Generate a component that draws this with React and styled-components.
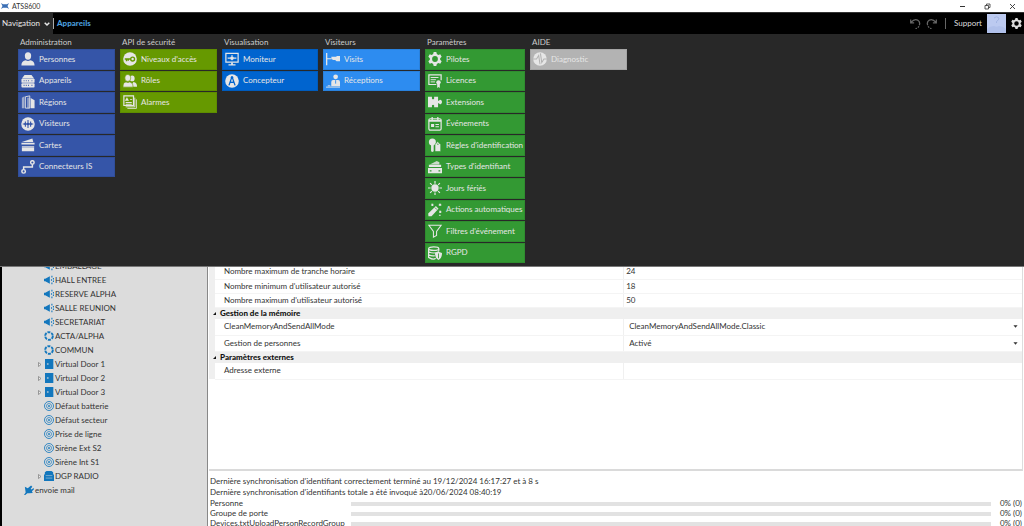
import React from "react";
import styled, { createGlobalStyle } from "styled-components";

const GlobalStyle = createGlobalStyle`
  * {
    box-sizing: border-box;
  }
  body {
    margin: 0;
    background: #fff;
    color: #333;
    font-family: Lato, "Open Sans", sans-serif;
    font-size: 8px;
    line-height: 11px;
  }
  button, input, select {
    font: inherit;
    color: inherit;
    margin: 0;
    padding: 0;
    border: 0;
    background: none;
  }
  ul {
    list-style: none;
    margin: 0;
    padding: 0;
  }
`;

const Window = styled.div`
  display: flex;
  flex-direction: column;
  height: 100vh;
  overflow: hidden;
`;

const TitleBar = styled.header`
  display: flex;
  align-items: center;
  gap: 3px;
  flex: none;
  height: 12px;
  padding: 0 7px 0 1px;
  background: #fff;
  color: #333;
  font-size: 7px;
`;

const WindowButtons = styled.div`
  display: flex;
  gap: 16px;
  margin-left: auto;

  button {
    display: flex;
    width: 9px;
    height: 9px;
    align-items: center;
    justify-content: center;
  }
`;

const Toolbar = styled.nav`
  display: flex;
  align-items: center;
  flex: none;
  height: 22px;
  padding-right: 2px;
  background: #000;
  border-top: 1px solid #333;
`;

const NavButton = styled.button`
  display: flex;
  align-items: center;
  gap: 4px;
  height: 100%;
  width: 53px;
  padding-left: 2px;
  background: #282828;
  color: #e8e8e8;
`;

const Separator = styled.span`
  width: 1px;
  height: 11px;
  background: ${({ $color }) => $color};
`;

const Crumb = styled.a`
  margin-left: 3px;
  color: #4a9cdb;
  font-weight: 900;
  text-decoration: none;
`;

const ToolbarEnd = styled.div`
  display: flex;
  align-items: center;
  gap: 5px;
  margin-left: auto;
  color: #ddd;

  button {
    display: flex;
  }
`;

const History = styled.div`
  display: flex;
  gap: 5px;
  margin-right: 3px;
  color: #666;
`;

const Support = styled.span`
  margin-left: 3px;
`;

const MegaMenu = styled.div`
  display: grid;
  grid-template-columns: 97px 97px 96px 97px 100px 97px;
  gap: 5px;
  flex: none;
  padding: 2px 18px 3px;
  background: #282828;
  border-bottom: 1px solid #777;
`;

const MenuTitle = styled.h2`
  margin: 0 0 1px 2px;
  color: #ccc;
  font-size: 8px;
  font-weight: 400;
  line-height: 12px;
`;

const Tiles = styled.div`
  display: grid;
  grid-template-rows: repeat(10, 1fr);
  gap: 1px;
  height: 214px;
`;

const Tile = styled.button`
  display: flex;
  align-items: center;
  gap: 4px;
  min-width: 0;
  padding: 0 0 0 3px;
  overflow: hidden;
  background: ${({ $color }) => $color};
  box-shadow: inset 0 0 0 1px rgba(0, 0, 0, 0.08);
  color: #e6e6e6;
  white-space: nowrap;

  svg {
    flex: none;
  }
`;

const Main = styled.main`
  display: flex;
  flex: 1;
  min-height: 0;
`;

const TreePanel = styled.aside`
  flex: none;
  width: 208px;
  overflow: hidden;
  background: #dcdcdc;
  border-left: 2px solid #000;
  border-right: 1px solid #888;
`;

const Tree = styled.ul`
  margin-top: -8px;
`;

const TreeItem = styled.li`
  display: flex;
  align-items: center;
  height: 14px;
  padding-left: ${({ $root }) => ($root ? 22 : 35)}px;
  white-space: nowrap;
`;

const TreeIcon = styled.span`
  display: flex;
  margin-right: 1px;
  color: #1377bd;
`;

const Expander = styled.button`
  display: flex;
  width: 7px;
`;

const Details = styled.section`
  display: flex;
  flex: 1;
  flex-direction: column;
  min-width: 0;
  padding: 0 1px;
`;

const GridPanel = styled.div`
  flex: none;
  height: 204px;
  overflow: hidden;
  border-right: 1px solid #ddd;
  border-bottom: 2px solid #dadada;
`;

const Properties = styled.table`
  width: 100%;
  margin-top: -2px;
  table-layout: fixed;
  border-collapse: collapse;

  .gutter {
    width: 6px;
  }
  .value {
    width: 49%;
  }
  th, td {
    padding: 0;
    text-align: left;
  }
`;

const PropertyRow = styled.tr`
  height: ${({ $tall }) => ($tall ? 16 : 14)}px;

  td:first-child {
    background: #efefef;
  }
  th {
    padding-left: 9px;
    border-bottom: 1px solid #f4f4f4;
    font-weight: 400;
  }
  td:last-child {
    border-left: 1px solid #f0f0f0;
    border-bottom: 1px solid #f4f4f4;
  }
`;

const GroupRow = styled.tr`
  height: 12px;
  background: #efefef;
  color: #111;

  button {
    display: flex;
    align-items: center;
    gap: 4px;
    padding-left: 4px;
    font-weight: 900;
  }
`;

const ValueInput = styled.input`
  display: block;
  width: 100%;
  height: 11px;
  padding-left: 2px;
`;

const SelectBox = styled.div`
  display: flex;
  align-items: center;
  padding-right: 4px;

  select {
    flex: 1;
    height: 12px;
    padding-left: 5px;
    appearance: none;
  }
`;

const Status = styled.footer`
  padding: 5px 1px 0 1px;

  p {
    margin: 0;
  }
`;

const ProgressRow = styled.div`
  display: grid;
  grid-template-columns: 141px 1fr 31px;
  align-items: center;
  height: 10px;

  progress {
    width: 100%;
    height: 4px;
    appearance: none;
    border: 0;
    background: #e2e2e2;
  }
  progress::-webkit-progress-bar {
    background: #e2e2e2;
  }
  output {
    text-align: right;
  }
`;

const Svg = ({ size = 14, box = 16, children }) => (
  <svg
    width={size}
    height={size}
    viewBox={`0 0 ${box} ${box}`}
    fill="currentColor"
    aria-hidden="true"
  >
    {children}
  </svg>
);

const line = { fill: "none", stroke: "currentColor", strokeWidth: 1.4 };

const glyphs = {
  person: (
    <>
      <ellipse cx="8" cy="4.6" rx="3.6" ry="4.200" />
      <path d="M.5 15.500c0-4 2-5.500 5-6.100 1.500 1.200 3.500 1.200 5 0 3 .6 5 2.100 5 6.100z" />
    </>
  ),
  device: (
    <>
      <path d="M4 1h8l3 4H1z" />
      <rect x="0.500" y="5.400" width="15" height="4.600" rx="1" />
      <rect x="0.500" y="10.700" width="15" height="4.600" rx="1" />
      <path d="M3 7.700h1M5.500 7.700h1M8 7.700h1M3 13h1M5.500 13h1M8 13h1M12 7.700h1M12 13h1" stroke="#3555a8" strokeWidth="1.300" />
    </>
  ),
  region: (
    <>
      <path d="M1 3l3-1.500V15H1z" opacity="0.6" />
      <path d="M5 2l5-1v14H5z" fill="none" stroke="currentColor" />
      <path d="M7 3h3v12H7z" opacity="0.5" />
      <path d="M11 3.500l4.500 2.500V15H11z" />
    </>
  ),
  visitor: (
    <>
      <circle cx="8" cy="8" r="7.700" />
      <path d="M2 8h12M5 5v6M8 3.500v9M11 5v6" stroke="#3555a8" strokeWidth="1.200" />
      <circle cx="5" cy="8" r="1.400" fill="#3555a8" />
      <circle cx="8" cy="8" r="1.400" fill="#3555a8" />
      <circle cx="11" cy="8" r="1.400" fill="#3555a8" />
    </>
  ),
  card: (
    <>
      <path d="M1 4.500l12-4 1 4z" />
      <path d="M.5 5.500h15v2H.5zM1 9h14v6H1z" />
      <path d="M1 10.300h14" stroke="#3555a8" strokeWidth="0.600" />
    </>
  ),
  connector: (
    <>
      <circle cx="3" cy="13" r="2" {...line} strokeWidth="1.700" />
      <circle cx="13" cy="2.800" r="2" {...line} strokeWidth="1.700" />
      <path d="M3 11V8h10V5" {...line} strokeWidth="1.700" />
    </>
  ),
  key: (
    <>
      <circle cx="8" cy="8" r="7.800" />
      <circle cx="11" cy="8" r="2.200" fill="none" stroke="#669900" strokeWidth="1.600" />
      <path d="M8.500 8H2M4 8v2.600M6 8v2" fill="none" stroke="#669900" strokeWidth="1.600" />
    </>
  ),
  roles: (
    <>
      <ellipse cx="10.500" cy="5" rx="2.800" ry="3.400" />
      <path d="M8 14.500h8c0-3.500-1-5-4-5.500z" />
      <g stroke="#669900" strokeWidth="0.700">
        <ellipse cx="5.500" cy="4.500" rx="3.400" ry="4" />
        <path d="M0 15c0-4 1-5.500 3.500-6q2 1.200 4 0C10 9.500 11.500 11 11.500 15z" />
      </g>
    </>
  ),
  alarm: (
    <>
      <path d="M1 1h11v11H1z" {...line} />
      <path d="M13.500 3v10.500H3M15.300 5v10.300H5" {...line} strokeWidth="1" />
      <path d="M4.500 2.500l2.300 4H2.200zM8 4.500h2.500v1H8zM3 8h7v1H3zM3 10h7v1H3z" />
    </>
  ),
  monitor: (
    <>
      <path d="M1 1.500h14v10H1z" {...line} />
      <path d="M7 12h2v2h3v1.500H4V14h3z" />
      <path d="M3 7h10M8 3.500v6M6.500 5.500l3 3M9.500 5.500l-3 3" {...line} strokeWidth="1.200" />
    </>
  ),
  compass: (
    <>
      <circle cx="8" cy="8" r="7.800" />
      <path d="M8 3L4.500 13M8 3l3.500 10M6 9q2 1 4 0" fill="none" stroke="#0064cf" strokeWidth="1.500" />
      <circle cx="8" cy="4" r="1.500" fill="#0064cf" />
    </>
  ),
  visits: (
    <>
      <path d="M0 1h1.500v14H0zM1.500 7h5v1.300h-5z" />
      <path d="M6 5.500h6v-1h4v6h-4L10.500 9H8L6.500 8z" />
    </>
  ),
  reception: (
    <>
      <circle cx="11" cy="3.200" r="2.700" />
      <path d="M6 14V9Q6 6.800 8 6.800h6q2 0 2 2.200v5z" />
      <path d="M0 15h16M2 13.500h3" {...line} strokeWidth="1" />
      <path d="M11 7v4" stroke="#2d8cf0" />
    </>
  ),
  gear: (
    <path d="M6.500 0h3l.6 2.300 1.700 1L14 2.700l1.600 2.700-1.700 1.700v1.800l1.700 1.700-1.600 2.700-2.200-.6-1.700 1L9.500 16h-3l-.6-2.300-1.700-1-2.200.6L.4 10.600 2.100 8.900V7.100L.4 5.400 2 2.700l2.200.6 1.700-1zM8 4.700a3.300 3.300 0 100 6.600 3.300 3.300 0 000-6.600z" fillRule="evenodd" />
  ),
  licence: (
    <>
      <path d="M9.500 12H1V1h14v6" {...line} />
      <path d="M3 4h9M3 6.500h6M3 9h5" {...line} strokeWidth="1.100" />
      <circle cx="12" cy="9.500" r="2.500" />
      <path d="M10.500 11.500h3V16L12 14.800 10.500 16z" />
    </>
  ),
  puzzle: (
    <path d="M0 2h4.500v2.200q1.300 1.200 2.500 0V2h4.500v4.500h1q1-1.500 2.300-.8 1.200.8 1.200 2.300t-1.200 2.300q-1.300.7-2.300-.8h-1V14H7v-2.200q-1.200-1.400-2.500 0V14H0z" />
  ),
  calendar: (
    <>
      <rect x="1" y="2" width="14" height="13" rx="1.500" {...line} />
      <path d="M1 3h14v2.500H1zM4 0h1.500v3H4zM10.500 0H12v3h-1.500zM3.500 8H7v3.500H3.500zM8.500 8h4v1.200h-4zM8.500 10.500h4v1.200h-4z" />
    </>
  ),
  rules: (
    <>
      <circle cx="5" cy="4.500" r="4" />
      <path d="M3.500 7h3v8L5 16l-1.500-1z" />
      <path d="M8 7.500L11 4l3.500 3.500v8H8z" stroke="#339933" strokeWidth="0.700" />
      <circle cx="11.300" cy="7" r="0.800" fill="#339933" />
    </>
  ),
  idcard: (
    <>
      <path d="M2 5l8-4 3 1.500V5z" opacity="0.85" />
      <path d="M1 5.500h14V8H1zM0 9h16v6H0z" />
      <path d="M2 12.500h2M12 12.500h2" stroke="#339933" strokeWidth="1.500" />
    </>
  ),
  sun: (
    <>
      <circle cx="8" cy="8" r="4.200" />
      <path d="M8 0v3M8 13v3M0 8h3M13 8h3M2.400 2.400l2 2M11.600 11.600l2 2M13.600 2.400l-2 2M4.400 11.600l-2 2" {...line} />
    </>
  ),
  wand: (
    <>
      <path d="M.5 15l-.3-3L9 3.500 12 6.500 4 15z" />
      <path d="M8 5.300l2.300 2.300" stroke="#339933" />
      <path d="M4 1l2 2M6 1L4 3M12.500 1l2.500 2M15 1l-2.500 2M13 9l2 2M15 9l-2 2M12.500 14h2" {...line} />
    </>
  ),
  filter: <path d="M1 1.500h14L9.800 8.500v4.500L6.200 15V8.500z" {...line} strokeWidth="1.200" />,
  database: (
    <>
      <ellipse cx="6.500" cy="3" rx="5.800" ry="2" {...line} />
      <path d="M.7 3v10q5.800 3.500 8 1M12.300 3v3M.7 6.500q5.800 3 11.600 0M.7 10q4 2 7 1" {...line} />
      <path d="M8 8l4-1.500L16 8q0 6-4 8-4-2-4-8z" />
      <path d="M12 8.500V14" stroke="#339933" />
    </>
  ),
  diagnostic: (
    <>
      <circle cx="8" cy="8" r="7.800" />
      <path d="M0 8h4L6.500 4l1.500 10M16 8h-3.500L10 12 8.500 1.500" fill="none" stroke="#b3b3b3" strokeWidth="1.200" />
    </>
  ),
};

const treeGlyphs = {
  zone: (
    <>
      <path d="M0 4.500h1.500L7 1.500v9l-5.500-3H0z" />
      <path d="M9.500 1v2M11.300 3.500v2M9 5v2M11.300 6.500v2M9.500 9v2" stroke="currentColor" strokeWidth="1.300" />
    </>
  ),
  ring: (
    <circle cx="6" cy="6" r="4.600" fill="none" stroke="currentColor" strokeWidth="2.300" strokeDasharray="3.600 1.200" />
  ),
  door: (
    <>
      <path d="M1.200 0h10v12h-10z" />
      <path d="M3.500 6h2" stroke="#dcdcdc" strokeWidth="1.400" />
    </>
  ),
  output: (
    <g fill="none" stroke="currentColor">
      <circle cx="6" cy="6" r="5.400" strokeWidth="1" />
      <circle cx="6" cy="6" r="3" strokeWidth="0.800" />
      <circle cx="6" cy="6" r="0.700" fill="currentColor" />
    </g>
  ),
  radio: (
    <>
      <path d="M3 0h6l2 1.500V4l1 .5V12H0V4.500L1 4V1.500z" />
      <path d="M2 5.500h8M2 8.500h8" stroke="#dcdcdc" strokeWidth="0.600" />
    </>
  ),
  plug: (
    <path d="M0 12l2-3L1 2l3.500 2L8.500.5 10 2 8 4.500l1 1L11.500 3.500 12 5 9.500 7.500l1 2-4.500.5-2 0L1.500 12z" />
  ),
};

const menu = [
  {
    title: "Administration",
    color: "#3555a8",
    items: [
      ["Personnes", "person"],
      ["Appareils", "device"],
      ["Régions", "region"],
      ["Visiteurs", "visitor"],
      ["Cartes", "card"],
      ["Connecteurs IS", "connector"],
    ],
  },
  {
    title: "API de sécurité",
    color: "#669900",
    items: [
      ["Niveaux d'accès", "key"],
      ["Rôles", "roles"],
      ["Alarmes", "alarm"],
    ],
  },
  {
    title: "Visualisation",
    color: "#0064cf",
    items: [
      ["Moniteur", "monitor"],
      ["Concepteur", "compass"],
    ],
  },
  {
    title: "Visiteurs",
    color: "#2d8cf0",
    items: [
      ["Visits", "visits"],
      ["Réceptions", "reception"],
    ],
  },
  {
    title: "Paramètres",
    color: "#339933",
    items: [
      ["Pilotes", "gear"],
      ["Licences", "licence"],
      ["Extensions", "puzzle"],
      ["Événements", "calendar"],
      ["Règles d'identification", "rules"],
      ["Types d'identifiant", "idcard"],
      ["Jours fériés", "sun"],
      ["Actions automatiques", "wand"],
      ["Filtres d'événement", "filter"],
      ["RGPD", "database"],
    ],
  },
  {
    title: "AIDE",
    color: "#b3b3b3",
    items: [["Diagnostic", "diagnostic"]],
  },
];

const tree = [
  ["EMBALLAGE", "zone"],
  ["HALL ENTREE", "zone"],
  ["RESERVE ALPHA", "zone"],
  ["SALLE REUNION", "zone"],
  ["SECRETARIAT", "zone"],
  ["ACTA/ALPHA", "ring"],
  ["COMMUN", "ring"],
  ["Virtual Door 1", "door", true],
  ["Virtual Door 2", "door", true],
  ["Virtual Door 3", "door", true],
  ["Défaut batterie", "output"],
  ["Défaut secteur", "output"],
  ["Prise de ligne", "output"],
  ["Sirène Ext S2", "output"],
  ["Sirène Int S1", "output"],
  ["DGP RADIO", "radio", true],
];

const properties = [
  { id: "max-slot", name: "Nombre maximum de tranche horaire", value: "24" },
  { id: "min-user", name: "Nombre minimum d'utilisateur autorisé", value: "18" },
  { id: "max-user", name: "Nombre maximum d'utilisateur autorisé", value: "50" },
  { group: "Gestion de la mémoire" },
  {
    id: "memory-mode",
    name: "CleanMemoryAndSendAllMode",
    value: "CleanMemoryAndSendAllMode.Classic",
    select: true,
  },
  { id: "people", name: "Gestion de personnes", value: "Activé", select: true },
  { group: "Paramètres externes" },
  { id: "address", name: "Adresse externe", value: "", tall: true },
];

const uploads = ["Personne", "Groupe de porte", "Devices.txtUploadPersonRecordGroup"];

const Property = ({ id, group, name, value, select, tall }) =>
  group ? (
    <GroupRow>
      <td colSpan={3}>
        <button type="button">
          <Svg size={3} box={4}>
            <path d="M4 0v4H0z" />
          </Svg>
          {group}
        </button>
      </td>
    </GroupRow>
  ) : (
    <PropertyRow $tall={select || tall}>
      <td />
      <th scope="row">
        <label htmlFor={id}>{name}</label>
      </th>
      <td>
        {select ? (
          <SelectBox>
            <select id={id} defaultValue={value}>
              <option>{value}</option>
            </select>
            <Svg size={5} box={6}>
              <path d="M.5 1.500h5L3 4.500z" />
            </Svg>
          </SelectBox>
        ) : (
          <ValueInput id={id} type="text" defaultValue={value} />
        )}
      </td>
    </PropertyRow>
  );

const App = () => (
  <Window>
    <GlobalStyle />
    <TitleBar>
      <Svg size={8}>
        <path d="M0 2l4 2.500h8L16 2l-3 6 3 6-4-2.500H4L0 14l3-6z" fill="#3a6fb5" />
      </Svg>
      <span>ATS8600</span>
      <WindowButtons>
        <button type="button" aria-label="Réduire">
          <Svg size={7} box={7}>
            <path d="M1 3h5v1H1z" />
          </Svg>
        </button>
        <button type="button" aria-label="Restaurer">
          <Svg size={7} box={7}>
            <path d="M1 2.500h3.500V6H1zM2.500 2.500V1H6v3.500H4.500" fill="none" stroke="currentColor" strokeWidth="0.800" />
          </Svg>
        </button>
        <button type="button" aria-label="Fermer">
          <Svg size={7} box={7}>
            <path d="M1 1l5 5M6 1L1 6" stroke="currentColor" strokeWidth="0.900" />
          </Svg>
        </button>
      </WindowButtons>
    </TitleBar>

    <Toolbar>
      <NavButton type="button">
        Navigation
        <Svg size={6} box={6}>
          <path d="M.7 1.700L3 4l2.300-2.300" fill="none" stroke="currentColor" strokeWidth="1.500" />
        </Svg>
      </NavButton>
      <Separator $color="#aaa" />
      <Crumb href="#appareils">Appareils</Crumb>
      <ToolbarEnd>
        <History>
          <button type="button" aria-label="Annuler">
            <Svg size={11}>
              <path d="M1 2v5h5M1.500 6.500Q6 1 11 3q4.500 3 2.500 7.500" {...line} strokeWidth="1.800" />
              <path d="M13 12l-1.500 2M10 15l-2 .5" {...line} strokeWidth="1.800" />
            </Svg>
          </button>
          <button type="button" aria-label="Rétablir">
            <Svg size={11}>
              <path d="M15 2v5h-5M14.500 6.500Q10 1 5 3 .5 6 2.500 10.500" {...line} strokeWidth="1.800" />
              <path d="M3 12l1.500 2M6 15l2 .5" {...line} strokeWidth="1.800" />
            </Svg>
          </button>
        </History>
        <Separator $color="#666" />
        <Support>Support</Support>
        <button type="button" aria-label="Utilisateur">
          <svg width="19" height="19" viewBox="0 0 19 19" aria-hidden="true">
            <path d="M0 0h19v19H0z" fill="#bccaf0" />
            <path d="M0 19v-4q3-3 7-3 2.500 1.500 5 0 4 0 7 3v4z" fill="#b0c0ea" />
            <path d="M7 4q2.500-2.500 5 0 0 2-2.500 3.500V9" fill="none" stroke="#a3b5e3" />
          </svg>
        </button>
        <button type="button" aria-label="Réglages">
          <Svg size={11}>{glyphs.gear}</Svg>
        </button>
      </ToolbarEnd>
    </Toolbar>

    <MegaMenu>
      {menu.map(({ title, color, items }) => (
        <section key={title}>
          <MenuTitle>{title}</MenuTitle>
          <Tiles>
            {items.map(([label, icon]) => (
              <Tile key={label} type="button" $color={color}>
                <Svg>{glyphs[icon]}</Svg>
                {label}
              </Tile>
            ))}
          </Tiles>
        </section>
      ))}
    </MegaMenu>

    <Main>
      <TreePanel>
        <Tree>
          {tree.map(([label, icon, expandable]) => (
            <TreeItem key={label}>
              {expandable ? (
                <Expander type="button" aria-label={`Développer ${label}`}>
                  <Svg size={5} box={5}>
                    <path d="M1.500 .5L4 2.500l-2.500 2z" fill="#eee" stroke="#777" strokeWidth="0.700" />
                  </Svg>
                </Expander>
              ) : (
                <Expander as="span" />
              )}
              <TreeIcon>
                <Svg size={10} box={12}>
                  {treeGlyphs[icon]}
                </Svg>
              </TreeIcon>
              {label}
            </TreeItem>
          ))}
          <TreeItem $root>
            <TreeIcon>
              <Svg size={10} box={12}>
                {treeGlyphs.plug}
              </Svg>
            </TreeIcon>
            envoie mail
          </TreeItem>
        </Tree>
      </TreePanel>

      <Details>
        <GridPanel>
          <Properties>
            <colgroup>
              <col className="gutter" />
              <col />
              <col className="value" />
            </colgroup>
            <tbody>
              {properties.map((row) => (
                <Property key={row.id || row.group} {...row} />
              ))}
            </tbody>
          </Properties>
        </GridPanel>
        <Status>
          <p>
            Dernière synchronisation d'identifiant correctement terminé au 19/12/2024 16:17:27 et à
            8 s
          </p>
          <p>Dernière synchronisation d'identifiants totale a été invoqué à20/06/2024 08:40:19</p>
          {uploads.map((name, i) => (
            <ProgressRow key={name}>
              <label htmlFor={`upload-${i}`}>{name}</label>
              <progress id={`upload-${i}`} value={0} max={100} />
              <output htmlFor={`upload-${i}`}>0% (0)</output>
            </ProgressRow>
          ))}
        </Status>
      </Details>
    </Main>
  </Window>
);

export default App;
